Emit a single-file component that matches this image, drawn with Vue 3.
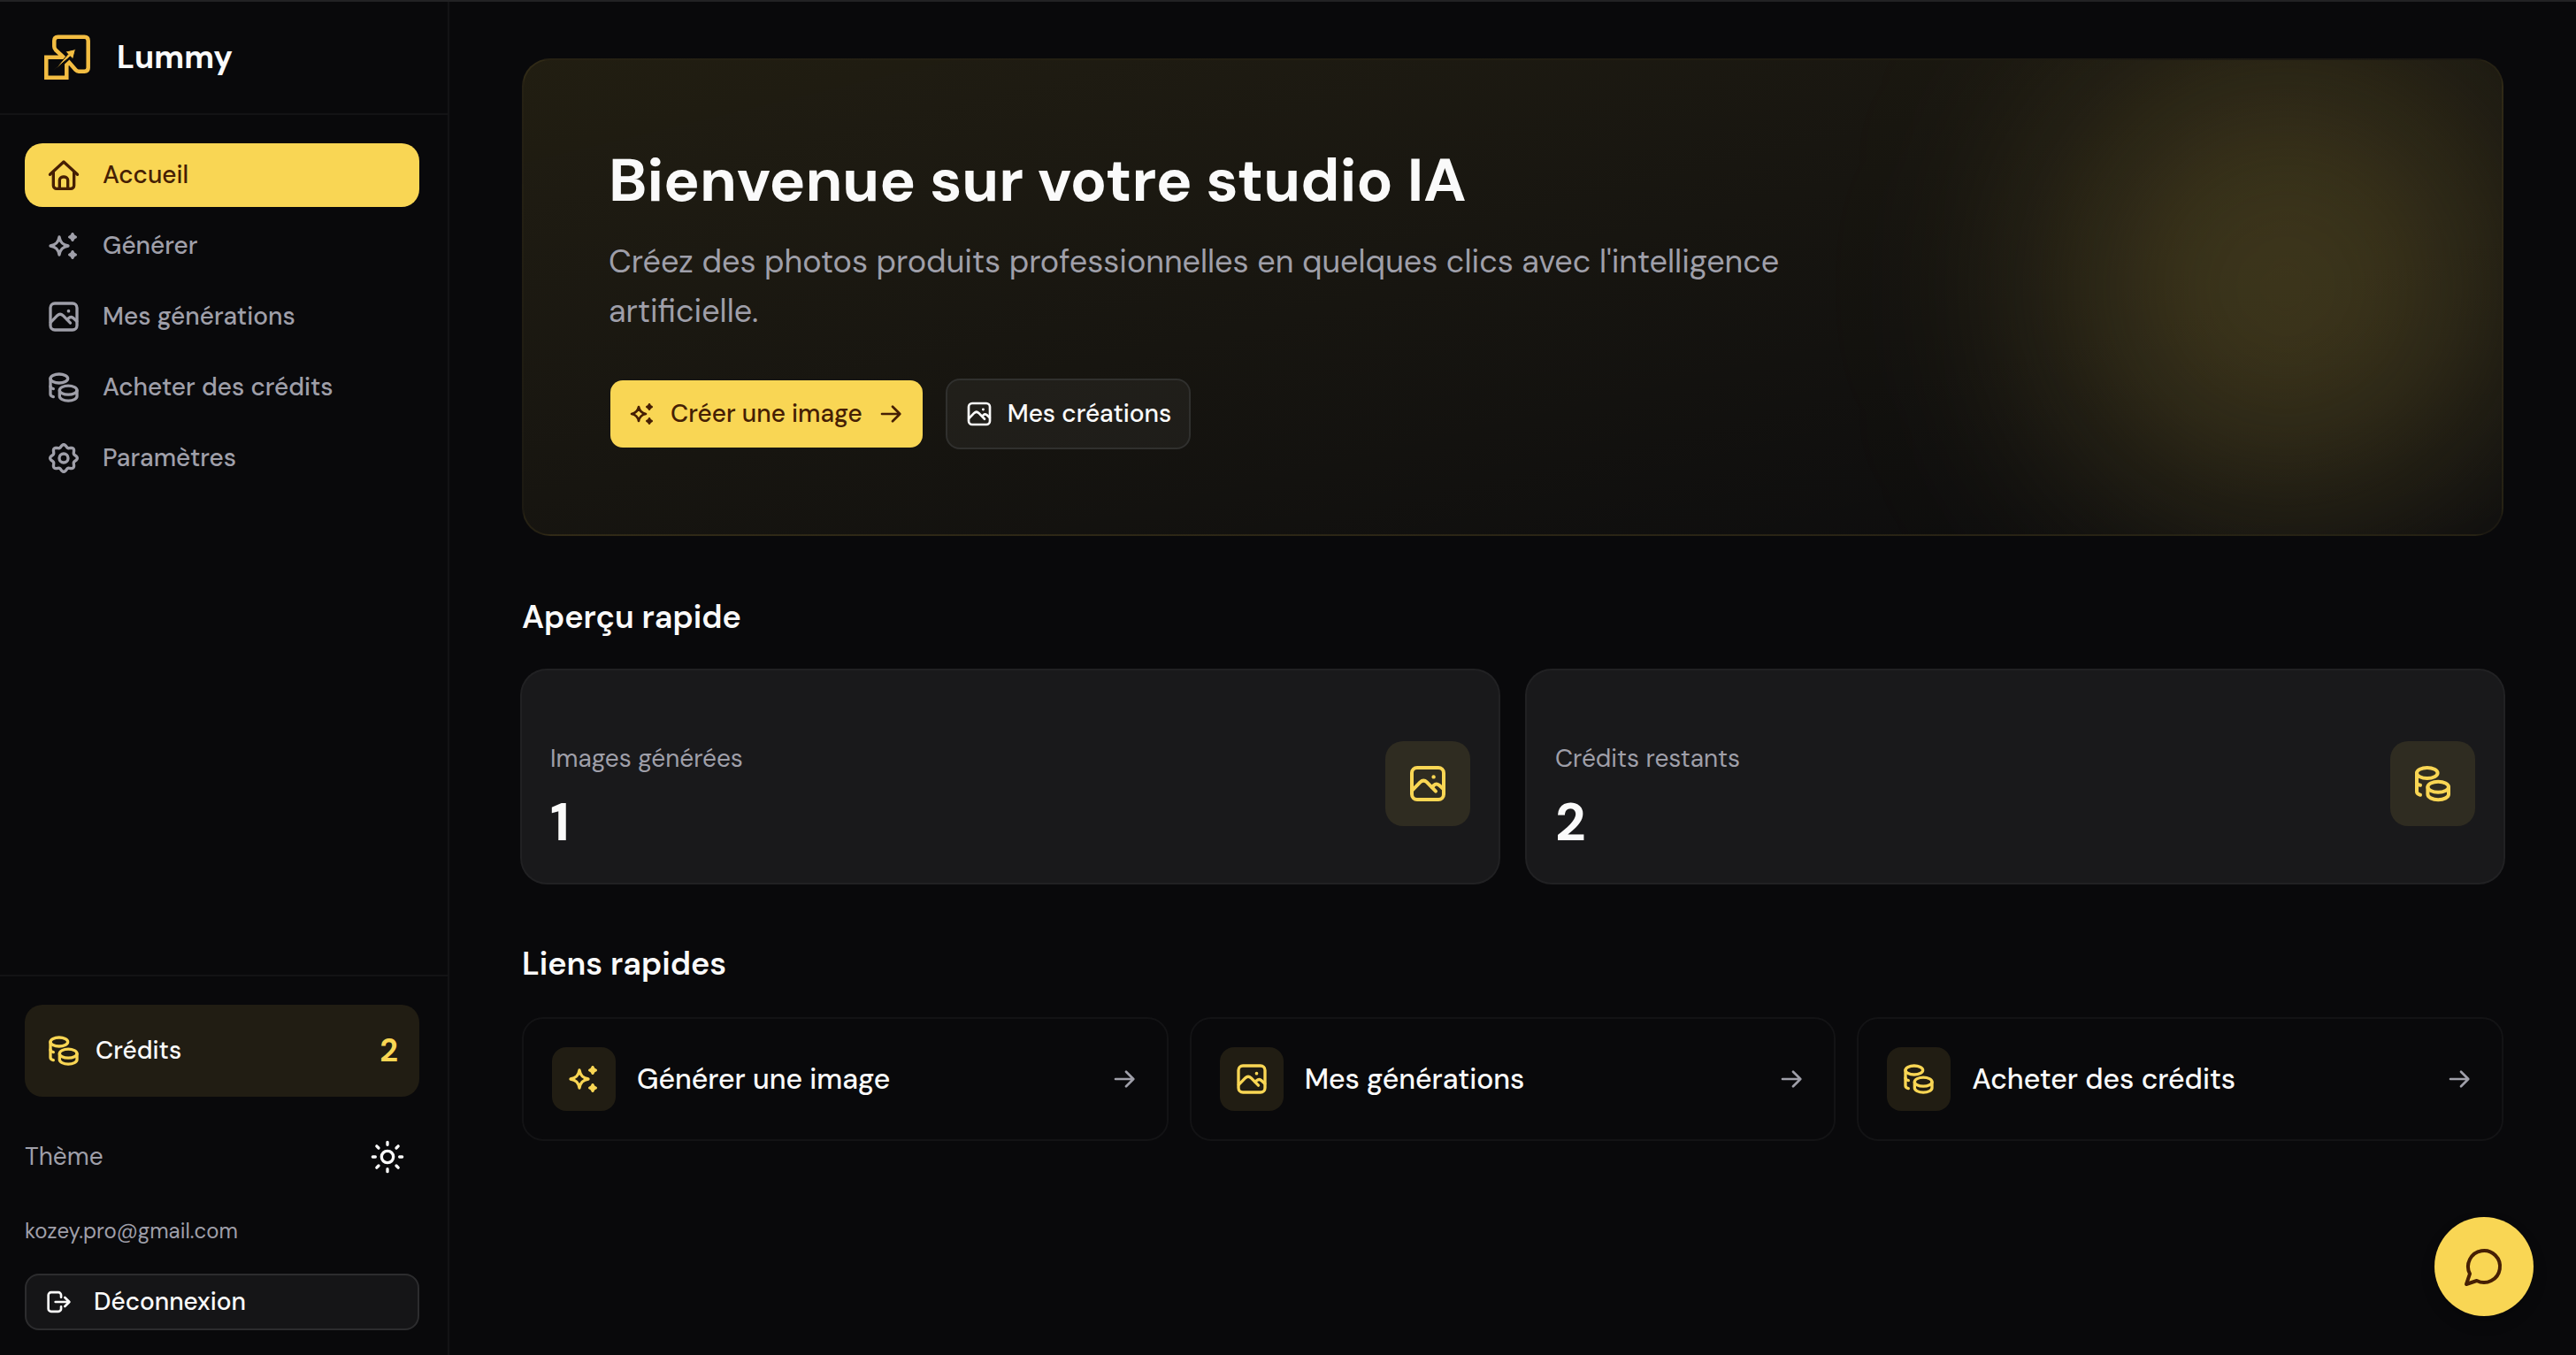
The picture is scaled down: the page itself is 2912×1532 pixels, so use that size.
<template>
  <div class="app">
    <aside class="sidebar">
      <a href="#" class="brand">
        <svg class="brand-logo" viewBox="0 0 60 60" fill="none">
          <path
            d="M23.700 29.700 L14.800 21.300 Q13.300 19.700 13.300 17.500 V11 Q13.300 6.700 17.500 6.700 H47.500 Q51.700 6.700 51.700 11 V41.500 Q51.700 45.700 47.500 45.700 H41 Q39 45.700 37.500 44 L30.300 35.700 L27.300 38.500 V52.700 H4.300 V29.700 Z"
            stroke="#f3bd42"
            stroke-width="4.5"
          />
          <path
            d="M13.200 44.500 L28.800 26.300 L26 23.200 L37.500 20.500 L34.500 32 L31.500 28.800 Z"
            fill="#f3bd42"
            stroke="#09090b"
            stroke-width="1"
          />
        </svg>
        <span class="brand-name">Lummy</span>
      </a>

      <nav class="nav" aria-label="Navigation principale">
        <a
          v-for="item in navItems"
          :key="item.label"
          href="#"
          class="nav-link"
          :class="{ active: item.label === current }"
          @click.prevent="current = item.label"
        >
          <svg class="icon icon-md" viewBox="0 0 24 24" v-html="icons[item.icon]"></svg>
          <span>{{ item.label }}</span>
        </a>
      </nav>

      <div class="sidebar-footer">
        <div class="credits">
          <svg class="icon icon-md" viewBox="0 0 24 24" v-html="icons.coins"></svg>
          <span class="credits-label">Crédits</span>
          <span class="credits-value">{{ credits }}</span>
        </div>

        <div class="theme-row">
          <span>Thème</span>
          <button type="button" class="theme-toggle" aria-label="Changer de thème">
            <svg class="icon icon-md" viewBox="0 0 24 24" v-html="icons.sun"></svg>
          </button>
        </div>

        <p class="email">kozey.pro@gmail.com</p>

        <button type="button" class="logout">
          <svg class="icon icon-sm" viewBox="0 0 24 24" v-html="icons.logout"></svg>
          <span>Déconnexion</span>
        </button>
      </div>
    </aside>

    <main class="main">
      <div class="content">
        <!-- Hero -->
        <section class="hero">
          <div class="hero-glow"></div>
          <div class="hero-body">
            <h1>Bienvenue sur votre studio IA</h1>
            <p>Créez des photos produits professionnelles en quelques clics avec l'intelligence artificielle.</p>
            <div class="hero-actions">
              <button type="button" class="btn btn-primary">
                <svg class="icon icon-sm" viewBox="0 0 24 24" v-html="icons.sparkles"></svg>
                <span>Créer une image</span>
                <svg class="icon icon-sm" viewBox="0 0 24 24" v-html="icons.arrow"></svg>
              </button>
              <button type="button" class="btn btn-outline">
                <svg class="icon icon-sm" viewBox="0 0 24 24" v-html="icons.image"></svg>
                <span>Mes créations</span>
              </button>
            </div>
          </div>
        </section>

        <!-- Statistiques -->
        <section class="section">
          <h2>Aperçu rapide</h2>
          <div class="stats">
            <div v-for="stat in stats" :key="stat.label" class="stat">
              <div class="stat-text">
                <span class="stat-label">{{ stat.label }}</span>
                <span class="stat-value">{{ stat.value }}</span>
              </div>
              <div class="stat-icon">
                <svg class="icon icon-lg" viewBox="0 0 24 24" v-html="icons[stat.icon]"></svg>
              </div>
            </div>
          </div>
        </section>

        <!-- Liens -->
        <section class="section">
          <h2>Liens rapides</h2>
          <div class="links">
            <a v-for="link in links" :key="link.label" href="#" class="link-card">
              <span class="link-icon">
                <svg class="icon icon-md" viewBox="0 0 24 24" v-html="icons[link.icon]"></svg>
              </span>
              <span class="link-label">{{ link.label }}</span>
              <svg class="icon icon-sm link-arrow" viewBox="0 0 24 24" v-html="icons.arrow"></svg>
            </a>
          </div>
        </section>
      </div>
    </main>

    <button type="button" class="chat" aria-label="Ouvrir le chat">
      <svg class="icon icon-lg" viewBox="0 0 24 24" v-html="icons.chat"></svg>
    </button>
  </div>
</template>

<script setup>
import { ref } from 'vue'

// Contour de la roue dentée (8 dents arrondies)
const gearPath = () => {
  const points = []
  for (let i = 0; i < 96; i++) {
    const angle = (i / 96) * Math.PI * 2
    const radius = 8.3 + 0.9 * Math.cos(angle * 8)
    points.push(`${(12 + radius * Math.sin(angle)).toFixed(2)} ${(12 - radius * Math.cos(angle)).toFixed(2)}`)
  }
  return `M${points.join('L')}Z`
}

const icons = {
  home: '<path d="M2.700 11.600L12 3l9.300 8.600"/><path d="M5 10v9a2.200 2.200 0 0 0 2.200 2.200h9.600a2.200 2.200 0 0 0 2.200-2.200v-9"/><path d="M9.200 21.200v-5.700a2.300 2.300 0 0 1 2.300-2.300h1a2.300 2.300 0 0 1 2.300 2.300v5.700"/>',
  sparkles:
    '<path d="M15 12c-3.700.7-5.300 2.300-6 6-.7-3.700-2.300-5.300-6-6 3.700-.7 5.300-2.300 6-6 .7 3.700 2.300 5.300 6 6Z"/><path fill="currentColor" d="M20 6c-1.200.4-1.600.8-2 2-.4-1.200-.8-1.600-2-2 1.200-.4 1.600-.8 2-2 .4 1.200.8 1.600 2 2Z"/><path fill="currentColor" d="M20 18c-1.200.4-1.600.8-2 2-.4-1.200-.8-1.600-2-2 1.200-.4 1.600-.8 2-2 .4 1.200.8 1.600 2 2Z"/>',
  image:
    '<rect x="3" y="3" width="18" height="18" rx="3"/><circle cx="15.300" cy="8.200" r="1.100" fill="currentColor" stroke="none"/><path d="M3.200 15.800L7.700 11.200q1.900-1.800 3.800 0L16.500 16.300"/><path d="M14.400 14l1-1q1.400-1.400 2.900-.2l2.600 2.300"/>',
  coins:
    '<ellipse cx="8.900" cy="6" rx="5.900" ry="3"/><path d="M3 6v10.500c0 1 .8 1.600 2 1.900"/><path d="M3 11.200c0 .8.800 1.400 2 1.700"/><ellipse cx="15.100" cy="13.900" rx="5.900" ry="3"/><path d="M9.200 14v4c0 1.700 2.600 3.100 5.900 3.100s5.900-1.400 5.900-3.100v-4"/>',
  settings: `<path d="${gearPath()}"/><circle cx="12" cy="12" r="3"/>`,
  sun: '<circle cx="12" cy="12" r="4"/><path d="M12 2v1.800M12 20.200v1.800M2 12h1.800M20.200 12h1.800M4.700 4.700l1.300 1.300M18 18l1.300 1.300M4.700 19.300l1.300-1.300M18 6l1.300-1.300"/>',
  logout:
    '<path d="M14.300 8V6.200A2.300 2.300 0 0 0 12 3.900H5.800A2.300 2.300 0 0 0 3.500 6.200v11.600a2.300 2.300 0 0 0 2.300 2.300H12a2.300 2.300 0 0 0 2.300-2.300V16"/><path d="M9.500 12h11.700M17.500 8.200l3.800 3.800-3.800 3.800"/>',
  arrow: '<path d="M4.500 12h15M13.500 5.800L19.700 12l-6.200 6.200"/>',
  chat: '<path d="M7.900 20A9 9 0 1 0 4 16.100L2 22Z"/>'
}

const navItems = [
  { label: 'Accueil', icon: 'home' },
  { label: 'Générer', icon: 'sparkles' },
  { label: 'Mes générations', icon: 'image' },
  { label: 'Acheter des crédits', icon: 'coins' },
  { label: 'Paramètres', icon: 'settings' }
]

const stats = [
  { label: 'Images générées', value: 1, icon: 'image' },
  { label: 'Crédits restants', value: 2, icon: 'coins' }
]

const links = [
  { label: 'Générer une image', icon: 'sparkles' },
  { label: 'Mes générations', icon: 'image' },
  { label: 'Acheter des crédits', icon: 'coins' }
]

const current = ref('Accueil')
const credits = ref(2)
</script>

<style>
body {
  background: #09090b;
}
</style>

<style scoped>
.app {
  display: grid;
  grid-template-columns: 508px 1fr;
  box-sizing: border-box;
  min-height: 100vh;
  border-top: 2px solid #222224;
  background: #09090b;
  color: #fafafa;
  font-family: 'DM Sans', Inter, 'Open Sans', sans-serif;
  font-size: 28px;
  line-height: 40px;
}

.app *,
.app *::before {
  box-sizing: border-box;
}

h1,
h2,
p {
  margin: 0;
}

a {
  color: inherit;
  text-decoration: none;
}

button {
  font: inherit;
  color: inherit;
  cursor: pointer;
}

.icon {
  flex: none;
  fill: none;
  stroke: currentColor;
  stroke-width: 2;
  stroke-linecap: round;
  stroke-linejoin: round;
}

.icon-sm {
  width: 32px;
  height: 32px;
}

.icon-md {
  width: 40px;
  height: 40px;
}

.icon-lg {
  width: 48px;
  height: 48px;
}

/* Sidebar */
.sidebar {
  display: flex;
  flex-direction: column;
  border-right: 2px solid #131315;
}

.brand {
  display: flex;
  align-items: center;
  gap: 24px;
  height: 128px;
  padding: 0 48px;
  border-bottom: 2px solid #131315;
}

.brand-logo {
  width: 60px;
  height: 60px;
}

.brand-name {
  font-size: 36px;
  font-weight: 700;
}

.nav {
  display: flex;
  flex: 1;
  flex-direction: column;
  gap: 8px;
  padding: 32px 32px 32px 28px;
}

.nav-link {
  display: flex;
  align-items: center;
  gap: 24px;
  height: 72px;
  padding: 0 24px;
  border-radius: 20px;
  color: #9f9fa9;
  font-weight: 500;
}

.nav-link.active {
  background: #f9d654;
  color: #461f04;
}

.sidebar-footer {
  display: flex;
  flex-direction: column;
  gap: 32px;
  padding: 32px 32px 28px 28px;
  border-top: 2px solid #131315;
}

.credits {
  display: flex;
  align-items: center;
  gap: 16px;
  height: 104px;
  padding: 0 24px;
  border-radius: 20px;
  background: #211d13;
  color: #f9d654;
}

.credits-label {
  flex: 1;
  color: #fafafa;
  font-weight: 500;
}

.credits-value {
  font-size: 36px;
  font-weight: 700;
}

.theme-row {
  display: flex;
  align-items: center;
  justify-content: space-between;
  color: #9f9fa9;
}

.theme-toggle {
  display: flex;
  align-items: center;
  justify-content: center;
  width: 72px;
  height: 72px;
  padding: 0;
  border: none;
  background: none;
  color: #fafafa;
}

.email {
  color: #9f9fa9;
  font-size: 24px;
  line-height: 32px;
}

.logout {
  display: flex;
  align-items: center;
  gap: 24px;
  height: 64px;
  padding: 0 20px;
  border: 2px solid #2c2c2e;
  border-radius: 16px;
  background: #151517;
  font-weight: 500;
}

/* Contenu principal */
.main {
  padding: 64px;
}

.content {
  display: flex;
  flex-direction: column;
  gap: 64px;
  max-width: 2240px;
  margin: 0 auto;
}

.hero {
  position: relative;
  overflow: hidden;
  padding: 96px;
  border: 2px solid rgba(249, 214, 84, 0.07);
  border-radius: 32px;
  background: linear-gradient(to bottom right, rgba(249, 214, 84, 0.1), rgba(255, 255, 255, 0.01));
}

.hero-glow {
  position: absolute;
  top: 0;
  right: -12px;
  width: 512px;
  height: 512px;
  border-radius: 50%;
  background: rgba(249, 214, 84, 0.2);
  filter: blur(128px);
}

.hero-body {
  position: relative;
  max-width: 1344px;
}

.hero h1 {
  font-size: 68px;
  font-weight: 700;
  line-height: 80px;
}

.hero p {
  margin-top: 24px;
  color: #9f9fa9;
  font-size: 36px;
  line-height: 56px;
}

.hero-actions {
  display: flex;
  gap: 24px;
  margin-top: 48px;
}

.btn {
  display: flex;
  align-items: center;
  gap: 16px;
  height: 80px;
  padding: 0 20px;
  border: 2px solid transparent;
  border-radius: 16px;
  font-weight: 500;
}

.btn-primary {
  background: #f9d654;
  background-clip: padding-box;
  color: #461f04;
}

.btn-outline {
  border-color: #30302e;
  background: rgba(255, 255, 255, 0.045);
}

.section {
  display: flex;
  flex-direction: column;
  gap: 32px;
}

.section h2 {
  font-size: 36px;
  font-weight: 600;
  line-height: 56px;
}

.stats {
  display: grid;
  grid-template-columns: repeat(2, 1fr);
  gap: 32px;
}

.stat {
  display: flex;
  align-items: flex-start;
  justify-content: space-between;
  padding: 80px 32px 32px;
  border-radius: 28px;
  background: #19191b;
  box-shadow: 0 0 0 2px #212123;
}

.stat-text {
  display: flex;
  flex-direction: column;
  gap: 16px;
}

.stat-label {
  color: #9f9fa9;
}

.stat-value {
  font-size: 60px;
  font-weight: 700;
  line-height: 72px;
}

.stat-icon {
  display: grid;
  place-items: center;
  width: 96px;
  height: 96px;
  border-radius: 20px;
  background: #2f2c21;
  color: #f9d654;
}

.links {
  display: grid;
  grid-template-columns: repeat(3, 1fr);
  gap: 24px;
}

.link-card {
  display: flex;
  align-items: center;
  gap: 24px;
  padding: 32px;
  border: 2px solid #131315;
  border-radius: 24px;
}

.link-icon {
  display: grid;
  place-items: center;
  width: 72px;
  height: 72px;
  border-radius: 16px;
  background: #211d13;
  color: #f9d654;
}

.link-label {
  flex: 1;
  font-size: 32px;
  font-weight: 500;
}

.link-arrow {
  color: #9f9fa9;
}

/* Bouton de chat flottant */
.chat {
  position: fixed;
  right: 48px;
  bottom: 44px;
  display: grid;
  place-items: center;
  width: 112px;
  height: 112px;
  padding: 0;
  border: none;
  border-radius: 50%;
  background: #f9d654;
  color: #461f04;
  box-shadow: 0 8px 16px rgba(0, 0, 0, 0.2);
}
</style>
